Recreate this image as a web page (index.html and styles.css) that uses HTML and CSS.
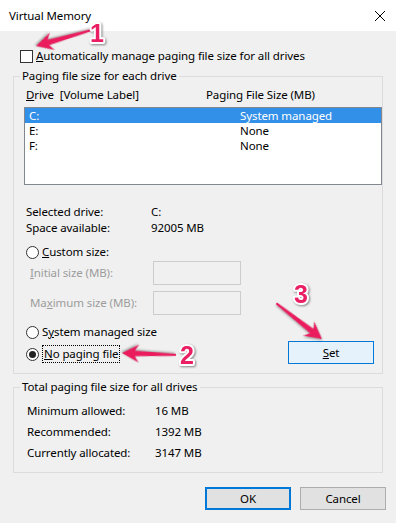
FILE: index.html
```html
<!DOCTYPE html>
<html>
<head>
<meta charset="utf-8">
<title>Virtual Memory</title>
<link rel="stylesheet" href="styles.css">
</head>
<body>
<div class="window">
  <div class="titlebar">
    <span class="title">Virtual Memory</span>
    <svg class="close" width="10" height="10" viewBox="0 0 10 10"><path d="M0 0L10 10M10 0L0 10" stroke="#000" stroke-width="1" fill="none"/></svg>
  </div>
  <div class="body">
    <div class="check-row"><span class="checkbox"></span><span><u>A</u>utomatically manage paging file size for all drives</span></div>

    <fieldset class="group group-drives">
      <legend>Paging file size for each drive</legend>
      <div class="list-head"><span class="col1"><u>D</u>rive&nbsp; [Volume Label]</span><span>Paging File Size (MB)</span></div>
      <div class="listbox">
        <div class="lrow selected"><span class="lcol1">C:</span><span>System managed</span></div>
        <div class="lrow"><span class="lcol1">E:</span><span>None</span></div>
        <div class="lrow"><span class="lcol1">F:</span><span>None</span></div>
      </div>
      <div class="info">
        <div class="info-row"><span class="info-label">Selected drive:</span><span>C:</span></div>
        <div class="info-row"><span class="info-label">Space available:</span><span>92005 MB</span></div>
      </div>
      <div class="radio-row custom"><span class="radio"></span><span><u>C</u>ustom size:</span></div>
      <div class="field-row first"><span class="field-label"><u>I</u>nitial size (MB):</span><span class="textbox"></span></div>
      <div class="field-row"><span class="field-label">Ma<u>x</u>imum size (MB):</span><span class="textbox"></span></div>
      <div class="bottom-row">
        <div class="radios">
          <div class="radio-row"><span class="radio"></span><span>S<u>y</u>stem managed size</span></div>
          <div class="radio-row gap"><span class="radio checked"></span><span class="focus"><u>N</u>o paging file</span></div>
        </div>
        <button class="btn btn-set"><u>S</u>et</button>
      </div>
    </fieldset>

    <fieldset class="group group-total">
      <legend>Total paging file size for all drives</legend>
      <div class="total-row"><span class="total-label">Minimum allowed:</span><span>16 MB</span></div>
      <div class="total-row"><span class="total-label">Recommended:</span><span>1392 MB</span></div>
      <div class="total-row"><span class="total-label">Currently allocated:</span><span>3147 MB</span></div>
    </fieldset>

    <div class="actions">
      <button class="btn btn-ok">OK</button>
      <button class="btn btn-cancel">Cancel</button>
    </div>
  </div>

  <svg class="annotations" width="396" height="523" viewBox="0 0 396 523">
    <g class="arrow" transform="translate(36 46) rotate(164)">
      <path d="M0 0 L-17 -9 Q-14 -5 -13 -2.8 L-58 -1 L-58 1 L-13 2.8 Q-14 5 -17 9 Z"/>
    </g>
    <g class="arrow" transform="translate(122 353) rotate(182)">
      <path d="M0 0 L-17 -9 Q-14 -5 -13 -2.8 L-54 -1 L-54 1 L-13 2.8 Q-14 5 -17 9 Z"/>
    </g>
    <g class="arrow" transform="translate(322 339) rotate(38)">
      <path d="M0 0 L-17 -9 Q-14 -5 -13 -2.8 L-58 -1 L-58 1 L-13 2.8 Q-14 5 -17 9 Z"/>
    </g>
    <text class="num" x="97" y="42">1</text>
    <text class="num" x="187" y="364">2</text>
    <text class="num" x="301" y="303">3</text>
  </svg>
</div>
</body>
</html>
```

FILE: styles.css
```css
* { box-sizing: border-box; }

html, body {
  margin: 0;
  padding: 0;
}

body {
  width: 396px;
  height: 523px;
  background: #f0f0f0;
  font-family: "Noto Sans", "Segoe UI", sans-serif;
  font-size: 11.5px;
  letter-spacing: -0.1px;
  line-height: 16px;
  color: #000;
  overflow: hidden;
}

.window {
  position: relative;
  width: 396px;
  height: 523px;
}

u { text-decoration: underline; text-underline-offset: 1px; }

.titlebar {
  height: 31px;
  background: #fff;
  display: flex;
  align-items: center;
  justify-content: space-between;
  padding: 0 11px 0 9px;
}

.title { font-size: 11.5px; }

.close { display: block; }

.body {
  padding-top: 17px;
}

.check-row {
  display: flex;
  align-items: center;
  height: 16px;
  margin-left: 20px;
  gap: 3px;
}

.checkbox {
  width: 13px;
  height: 13px;
  border: 1px solid #333;
  background: #fff;
  flex: none;
}

.group {
  margin: 4px 13px 0 13px;
  padding: 0;
  border: 1px solid #dcdcdc;
  min-width: 0;
}

.group legend {
  margin-left: 6px;
  padding: 0 2px;
  line-height: 16px;
}

.group-drives {
  padding-bottom: 9px;
}

.list-head {
  display: flex;
  margin-top: 3px;
  padding-left: 12px;
}

.list-head .col1 { width: 180px; }

.listbox {
  margin: 4px 0 0 10px;
  height: 78px;
  border: 1px solid #828790;
  background: #fff;
}

.lrow {
  display: flex;
  height: 15px;
  line-height: 15px;
  padding-left: 4px;
}

.lrow.selected {
  background: #3390e8;
  color: #fff;
}

.lcol1 { width: 211px; }

.info {
  margin-top: 19px;
  padding-left: 12px;
}

.info-row { display: flex; }

.info-label { width: 125px; }

.radio-row {
  display: flex;
  align-items: center;
  gap: 3px;
  margin-left: 12px;
  height: 18px;
}

.radio-row.custom {
  margin-top: 7px;
}

.radio {
  width: 13px;
  height: 13px;
  border: 1px solid #333;
  border-radius: 50%;
  background: #fff;
  flex: none;
  display: flex;
  align-items: center;
  justify-content: center;
}

.radio.checked::after {
  content: "";
  width: 7px;
  height: 7px;
  border-radius: 50%;
  background: #222;
}

.focus {
  border: 1px dotted #000;
  padding: 0 1px;
  line-height: 16px;
}

.field-row {
  display: flex;
  align-items: center;
  margin-left: 16px;
  margin-top: 6px;
  height: 24px;
}

.field-row.first { margin-top: 0; }

.field-label {
  width: 123px;
  color: #9c9c9c;
}

.textbox {
  width: 88px;
  height: 24px;
  border: 1px solid #cccccc;
  background: #f0f0f0;
}

.bottom-row {
  display: flex;
  align-items: flex-end;
  justify-content: space-between;
  margin-top: 8px;
  padding-right: 8px;
}

.radios {
  padding-bottom: 1px;
}

.radio-row.gap { margin-top: 4px; }

.btn {
  font-family: inherit;
  font-size: 11.5px;
  letter-spacing: -0.1px;
  line-height: 16px;
  color: #000;
  width: 86px;
  height: 23px;
  padding: 0;
  margin: 0;
  background: #e1e1e1;
  border: 1px solid #adadad;
}

.btn-set {
  background: #e5f1fb;
  border-color: #0078d7;
}

.group-total {
  margin-top: 5px;
  padding-top: 5px;
  padding-bottom: 9px;
}

.total-row {
  display: flex;
  line-height: 21px;
  padding-left: 13px;
}

.total-label { width: 128px; }

.actions {
  display: flex;
  justify-content: flex-end;
  gap: 9px;
  margin-top: 14px;
  padding-right: 10px;
}

.btn-ok {
  border: 2px solid #0078d7;
}

.annotations {
  position: absolute;
  left: 0;
  top: 0;
  pointer-events: none;
}

.arrow {
  fill: #ea1c5d;
  filter: drop-shadow(1px 1px 1px rgba(0, 0, 0, 0.35));
}

.num {
  font-family: "Liberation Sans", Arial, sans-serif;
  font-weight: bold;
  font-size: 25px;
  text-anchor: middle;
  fill: #e91e63;
  stroke: #fff;
  stroke-width: 4px;
  paint-order: stroke;
  stroke-linejoin: round;
  filter: drop-shadow(1px 1px 1px rgba(0, 0, 0, 0.45));
}
```
